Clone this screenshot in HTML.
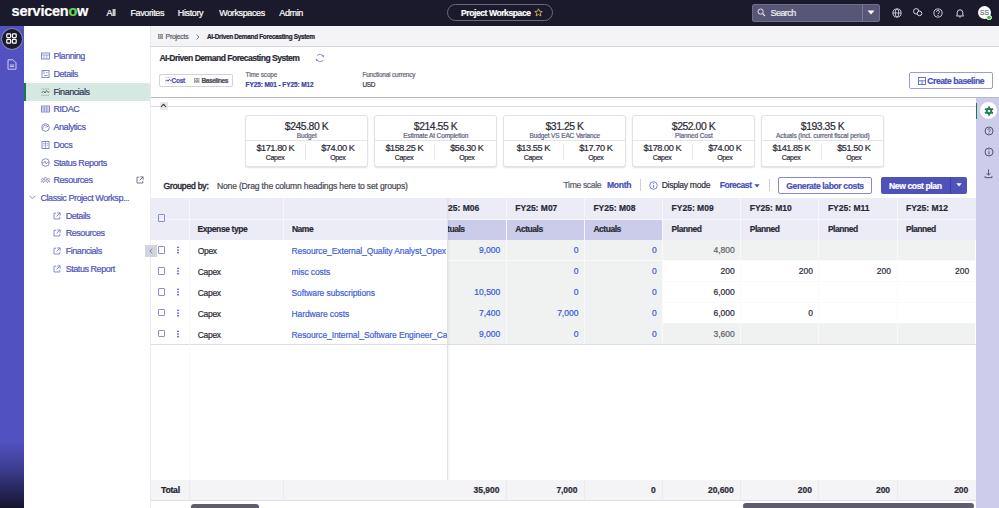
<!DOCTYPE html>
<html><head><meta charset="utf-8"><style>
html,body{margin:0;padding:0;}
body{width:999px;height:508px;overflow:hidden;position:relative;font-family:"Liberation Sans", sans-serif;background:#fff;}
div{-webkit-text-stroke:0.2px currentColor;}
</style></head><body>
<div style="position:absolute;left:0px;top:0px;width:999px;height:26px;background:#1b1a2c;"></div>
<div style="position:absolute;left:11.6px;top:1.8499999999999996px;height:18px;line-height:18px;font-size:14.5px;font-weight:700;color:#fff;letter-spacing:-0.25px;white-space:nowrap;">servicen<span style="color:#62d84e">o</span>w</div>
<div style="position:absolute;left:106.6px;top:6.5px;height:12px;line-height:12px;font-size:9px;font-weight:400;color:#fff;letter-spacing:-0.38px;white-space:nowrap;">All</div>
<div style="position:absolute;left:130.5px;top:6.5px;height:12px;line-height:12px;font-size:9px;font-weight:400;color:#fff;letter-spacing:-0.38px;white-space:nowrap;">Favorites</div>
<div style="position:absolute;left:177.8px;top:6.5px;height:12px;line-height:12px;font-size:9px;font-weight:400;color:#fff;letter-spacing:-0.38px;white-space:nowrap;">History</div>
<div style="position:absolute;left:219.3px;top:6.5px;height:12px;line-height:12px;font-size:9px;font-weight:400;color:#fff;letter-spacing:-0.38px;white-space:nowrap;">Workspaces</div>
<div style="position:absolute;left:279.3px;top:6.5px;height:12px;line-height:12px;font-size:9px;font-weight:400;color:#fff;letter-spacing:-0.38px;white-space:nowrap;">Admin</div>
<div style="position:absolute;left:447px;top:4px;width:106px;height:17px;border:1px solid #6b6a7c;border-radius:9px;box-sizing:border-box;"></div>
<div style="position:absolute;left:461px;top:6.6px;height:12px;line-height:12px;font-size:8.6px;font-weight:700;color:#fff;letter-spacing:-0.45px;white-space:nowrap;">Project Workspace</div>
<svg style="position:absolute;left:534px;top:7.5px" width="9" height="9" viewBox="0 0 9 9"><path d="M4.5 0.8 L5.6 3.3 L8.2 3.5 L6.2 5.2 L6.9 7.9 L4.5 6.5 L2.1 7.9 L2.8 5.2 L0.8 3.5 L3.4 3.3 Z" fill="none" stroke="#d9b25c" stroke-width="0.9" stroke-linejoin="round"/></svg>
<div style="position:absolute;left:752px;top:3.5px;width:128px;height:18px;background:#575677;border:1px solid #6e6d8a;border-radius:2px;box-sizing:border-box;"></div>
<div style="position:absolute;left:862px;top:4.5px;width:1px;height:16px;background:#7b7a94;"></div>
<svg style="position:absolute;left:757px;top:8px" width="9" height="9" viewBox="0 0 9 9"><circle cx="3.6" cy="3.6" r="2.6" fill="none" stroke="#e6e6ee" stroke-width="1"/><path d="M5.5 5.5 L8 8" stroke="#e6e6ee" stroke-width="1.1"/></svg>
<div style="position:absolute;left:770.5px;top:6.6px;height:12px;line-height:12px;font-size:9px;font-weight:400;color:#f0f0f5;letter-spacing:-0.55px;white-space:nowrap;">Search</div>
<svg style="position:absolute;left:867px;top:10px" width="8" height="5" viewBox="0 0 8 5"><path d="M0.5 0.5 L7.5 0.5 L4 4.5 Z" fill="#fff"/></svg>
<svg style="position:absolute;left:891.7px;top:7.5px" width="10" height="10" viewBox="0 0 10 10"><circle cx="5" cy="5" r="4.1" fill="none" stroke="#e8e8ee" stroke-width="0.85"/><ellipse cx="5" cy="5" rx="1.7" ry="4.1" fill="none" stroke="#e8e8ee" stroke-width="0.75"/><path d="M0.9 5 H9.1" stroke="#e8e8ee" stroke-width="0.75"/></svg>
<svg style="position:absolute;left:910px;top:5px" width="14" height="14" viewBox="0 0 14 14"><circle cx="6.2" cy="6.3" r="2.7" fill="none" stroke="#e8e8ee" stroke-width="0.9"/><circle cx="9.5" cy="8.4" r="2.3" fill="#1b1a2c" stroke="#e8e8ee" stroke-width="0.9"/></svg>
<svg style="position:absolute;left:933px;top:7.6px" width="10" height="10" viewBox="0 0 10 10"><circle cx="5" cy="5" r="4.1" fill="none" stroke="#e8e8ee" stroke-width="0.85"/><path d="M3.6 3.8 a1.4 1.4 0 1 1 1.9 1.3 L5 6" fill="none" stroke="#e8e8ee" stroke-width="0.9"/><circle cx="5" cy="7.4" r="0.55" fill="#e8e8ee"/></svg>
<svg style="position:absolute;left:955px;top:7.5px" width="10" height="10" viewBox="0 0 10 10"><path d="M2.2 7.2 V4.6 a2.8 2.8 0 0 1 5.6 0 V7.2 L8.6 8 H1.4 Z" fill="none" stroke="#e8e8ee" stroke-width="0.9" stroke-linejoin="round"/><path d="M4.2 9 H5.8" stroke="#e8e8ee" stroke-width="0.9"/></svg>
<div style="position:absolute;left:978px;top:6px;width:13px;height:13px;background:#fff;border-radius:50%;"></div>
<div style="position:absolute;left:684.4px;width:600px;text-align:center;top:6.5px;height:12px;line-height:12px;font-size:6.6px;font-weight:400;color:#6a6a78;letter-spacing:-0.1px;white-space:nowrap;">SS</div>
<div style="position:absolute;left:986.2px;top:14.6px;width:3.8px;height:3.8px;background:#4cc23a;border-radius:50%;border:0.5px solid #fff;"></div>
<div style="position:absolute;left:0px;top:26px;width:24px;height:482px;background:linear-gradient(to bottom,#5151c1 0px,#5151c1 416px,#3a3a8a 446px,#22204e 470px,#15142a 482px);"></div>
<div style="position:absolute;left:1.5px;top:28.5px;width:20.5px;height:20.5px;background:#1b1a2c;border-radius:50%;box-shadow:0 0 0 0.8px #8a8ab0;"></div>
<svg style="position:absolute;left:6px;top:33px" width="11" height="11" viewBox="0 0 11 11"><rect x="0.8" y="0.8" width="3.8" height="3.8" rx="0.8" fill="none" stroke="#fff" stroke-width="1.2"/><rect x="6.4" y="0.8" width="3.8" height="3.8" rx="0.8" fill="none" stroke="#fff" stroke-width="1.2"/><rect x="0.8" y="6.4" width="3.8" height="3.8" rx="0.8" fill="none" stroke="#fff" stroke-width="1.2"/><rect x="6.4" y="6.4" width="3.8" height="3.8" rx="0.8" fill="none" stroke="#fff" stroke-width="1.2"/></svg>
<svg style="position:absolute;left:6.5px;top:58.5px" width="10" height="11" viewBox="0 0 10 11"><path d="M1 0.8 H6 L9 3.8 V10.2 H1 Z" fill="none" stroke="#dcdcf0" stroke-width="0.9" stroke-linejoin="round"/><path d="M2.8 6 H7.2 M2.8 7.6 H7.2" stroke="#dcdcf0" stroke-width="0.9"/></svg>
<div style="position:absolute;left:24px;top:26px;width:127px;height:482px;background:#fff;"></div>
<div style="position:absolute;left:150px;top:26px;width:2px;height:482px;background:#e9e9ee;"></div>
<div style="position:absolute;left:24px;top:83px;width:126px;height:17.5px;background:#d5e8e2;"></div>
<div style="position:absolute;left:24px;top:83px;width:2px;height:17.5px;background:#1b7a4c;"></div>
<div style="position:absolute;left:53.5px;top:50.0px;height:12px;line-height:12px;font-size:9px;font-weight:400;color:#4e52b8;letter-spacing:-0.45px;white-space:nowrap;">Planning</div>
<div style="position:absolute;left:53.5px;top:67.8px;height:12px;line-height:12px;font-size:9px;font-weight:400;color:#4e52b8;letter-spacing:-0.45px;white-space:nowrap;">Details</div>
<div style="position:absolute;left:53.5px;top:85.6px;height:12px;line-height:12px;font-size:9px;font-weight:400;color:#30325a;letter-spacing:-0.45px;white-space:nowrap;">Financials</div>
<div style="position:absolute;left:53.5px;top:103.2px;height:12px;line-height:12px;font-size:9px;font-weight:400;color:#4e52b8;letter-spacing:-0.45px;white-space:nowrap;">RIDAC</div>
<div style="position:absolute;left:53.5px;top:121.0px;height:12px;line-height:12px;font-size:9px;font-weight:400;color:#4e52b8;letter-spacing:-0.45px;white-space:nowrap;">Analytics</div>
<div style="position:absolute;left:53.5px;top:138.8px;height:12px;line-height:12px;font-size:9px;font-weight:400;color:#4e52b8;letter-spacing:-0.45px;white-space:nowrap;">Docs</div>
<div style="position:absolute;left:53.5px;top:156.5px;height:12px;line-height:12px;font-size:9px;font-weight:400;color:#4e52b8;letter-spacing:-0.45px;white-space:nowrap;">Status Reports</div>
<div style="position:absolute;left:53.5px;top:174.2px;height:12px;line-height:12px;font-size:9px;font-weight:400;color:#4e52b8;letter-spacing:-0.45px;white-space:nowrap;">Resources</div>
<svg style="position:absolute;left:40.5px;top:52px" width="9" height="8" viewBox="0 0 9 8"><rect x="0.5" y="1" width="8" height="6" fill="none" stroke="#7a7ecc" stroke-width="0.9"/><path d="M0.5 3 H8.5 M3 3 V7 M5.8 3 V7" stroke="#7a7ecc" stroke-width="0.7"/></svg>
<svg style="position:absolute;left:40.5px;top:69.8px" width="9" height="8" viewBox="0 0 9 8"><rect x="1" y="0.5" width="7" height="7" fill="none" stroke="#7a7ecc" stroke-width="0.9"/><path d="M3 0.5 V4 M3 5.5 H6.5 M5 2.5 H6.5" stroke="#7a7ecc" stroke-width="0.8"/></svg>
<svg style="position:absolute;left:40.5px;top:87.6px" width="9" height="8" viewBox="0 0 9 8"><path d="M0.5 1 H8.5 M0.5 7.3 H8.5" stroke="#5b5b6a" stroke-width="0.5" stroke-dasharray="1 0.6"/><path d="M0.5 5 L2.5 3 L4 5 L5.5 2.5 L7 4.5 L8.5 3.5" fill="none" stroke="#5b5b6a" stroke-width="0.9"/></svg>
<svg style="position:absolute;left:40.5px;top:105.2px" width="9" height="8" viewBox="0 0 9 8"><rect x="0.5" y="1" width="8" height="6" fill="none" stroke="#7a7ecc" stroke-width="0.9"/><path d="M0.5 3 H8.5 M0.5 5 H8.5 M3.2 1 V7 M5.8 1 V7" stroke="#7a7ecc" stroke-width="0.7"/></svg>
<svg style="position:absolute;left:40.5px;top:122.5px" width="9" height="9" viewBox="0 0 9 9"><circle cx="4.5" cy="4.5" r="3.8" fill="none" stroke="#7a7ecc" stroke-width="0.9"/><path d="M2 6 a2.6 2.6 0 0 1 5 -2 M4.5 5 L6.5 3" fill="none" stroke="#7a7ecc" stroke-width="0.8"/></svg>
<svg style="position:absolute;left:40.5px;top:140.8px" width="9" height="8" viewBox="0 0 9 8"><rect x="1" y="0.5" width="7" height="7" fill="none" stroke="#7a7ecc" stroke-width="0.9"/><path d="M4.5 0.5 V7.5 M2.2 2.5 H3.6 M5.4 2.5 H6.8 M2.2 4.2 H3.6 M5.4 4.2 H6.8" stroke="#7a7ecc" stroke-width="0.7"/></svg>
<svg style="position:absolute;left:40.5px;top:158.0px" width="9" height="9" viewBox="0 0 9 9"><circle cx="4.5" cy="4.5" r="3.8" fill="none" stroke="#7a7ecc" stroke-width="0.9"/><path d="M1 4.8 L3 4.8 L4 3 L5.2 6 L6.2 4.5 L8 4.5" fill="none" stroke="#7a7ecc" stroke-width="0.8"/></svg>
<svg style="position:absolute;left:40.5px;top:176.2px" width="9" height="8" viewBox="0 0 9 8"><circle cx="4.5" cy="2.8" r="1.4" fill="none" stroke="#7a7ecc" stroke-width="0.8"/><circle cx="1.6" cy="3.4" r="1" fill="none" stroke="#7a7ecc" stroke-width="0.7"/><circle cx="7.4" cy="3.4" r="1" fill="none" stroke="#7a7ecc" stroke-width="0.7"/><path d="M2.4 7 a2.1 2 0 0 1 4.2 0 M0 6.6 a1.5 1.5 0 0 1 2 -1.4 M9 6.6 a1.5 1.5 0 0 0 -2 -1.4" fill="none" stroke="#7a7ecc" stroke-width="0.8"/></svg>
<svg style="position:absolute;left:136px;top:176.0px" width="8" height="8" viewBox="0 0 8 8"><path d="M3.2 1.2 H1 V7 H6.8 V4.8" fill="none" stroke="#6a6a7a" stroke-width="0.9"/><path d="M4.2 0.9 H7.1 V3.8 M7.1 0.9 L3.6 4.4" fill="none" stroke="#6a6a7a" stroke-width="0.9"/></svg>
<svg style="position:absolute;left:28.5px;top:195px" width="7" height="5" viewBox="0 0 7 5"><path d="M0.6 0.8 L3.5 3.8 L6.4 0.8" fill="none" stroke="#8a8aa0" stroke-width="0.9"/></svg>
<div style="position:absolute;left:40.5px;top:192.0px;height:12px;line-height:12px;font-size:9px;font-weight:400;color:#4e52b8;letter-spacing:-0.45px;white-space:nowrap;">Classic Project Worksp...</div>
<svg style="position:absolute;left:52.5px;top:211.6px" width="8" height="8" viewBox="0 0 8 8"><path d="M3.2 1.2 H1 V7 H6.8 V4.8" fill="none" stroke="#7a7ecc" stroke-width="0.9"/><path d="M4.2 0.9 H7.1 V3.8 M7.1 0.9 L3.6 4.4" fill="none" stroke="#7a7ecc" stroke-width="0.9"/></svg>
<div style="position:absolute;left:65.7px;top:209.6px;height:12px;line-height:12px;font-size:9px;font-weight:400;color:#4e52b8;letter-spacing:-0.45px;white-space:nowrap;">Details</div>
<svg style="position:absolute;left:52.5px;top:229.3px" width="8" height="8" viewBox="0 0 8 8"><path d="M3.2 1.2 H1 V7 H6.8 V4.8" fill="none" stroke="#7a7ecc" stroke-width="0.9"/><path d="M4.2 0.9 H7.1 V3.8 M7.1 0.9 L3.6 4.4" fill="none" stroke="#7a7ecc" stroke-width="0.9"/></svg>
<div style="position:absolute;left:65.7px;top:227.3px;height:12px;line-height:12px;font-size:9px;font-weight:400;color:#4e52b8;letter-spacing:-0.45px;white-space:nowrap;">Resources</div>
<svg style="position:absolute;left:52.5px;top:247.0px" width="8" height="8" viewBox="0 0 8 8"><path d="M3.2 1.2 H1 V7 H6.8 V4.8" fill="none" stroke="#7a7ecc" stroke-width="0.9"/><path d="M4.2 0.9 H7.1 V3.8 M7.1 0.9 L3.6 4.4" fill="none" stroke="#7a7ecc" stroke-width="0.9"/></svg>
<div style="position:absolute;left:65.7px;top:245.0px;height:12px;line-height:12px;font-size:9px;font-weight:400;color:#4e52b8;letter-spacing:-0.45px;white-space:nowrap;">Financials</div>
<svg style="position:absolute;left:52.5px;top:264.7px" width="8" height="8" viewBox="0 0 8 8"><path d="M3.2 1.2 H1 V7 H6.8 V4.8" fill="none" stroke="#7a7ecc" stroke-width="0.9"/><path d="M4.2 0.9 H7.1 V3.8 M7.1 0.9 L3.6 4.4" fill="none" stroke="#7a7ecc" stroke-width="0.9"/></svg>
<div style="position:absolute;left:65.7px;top:262.7px;height:12px;line-height:12px;font-size:9px;font-weight:400;color:#4e52b8;letter-spacing:-0.45px;white-space:nowrap;">Status Report</div>
<div style="position:absolute;left:151px;top:26px;width:848px;height:482px;background:#fff;"></div>
<div style="position:absolute;left:151px;top:26px;width:848px;height:20px;background:#f4f4f6;"></div>
<div style="position:absolute;left:151px;top:46px;width:848px;height:1.4px;background:#d4d5dc;"></div>
<svg style="position:absolute;left:157.8px;top:34px" width="5.2" height="5.2" viewBox="0 0 5.2 5.2"><rect x="0.4" y="0.4" width="1.8" height="1.8" fill="none" stroke="#777" stroke-width="0.7"/><rect x="3" y="0.4" width="1.8" height="1.8" fill="none" stroke="#777" stroke-width="0.7"/><rect x="0.4" y="3" width="1.8" height="1.8" fill="none" stroke="#777" stroke-width="0.7"/><rect x="3" y="3" width="1.8" height="1.8" fill="none" stroke="#777" stroke-width="0.7"/></svg>
<div style="position:absolute;left:165.6px;top:31.1px;height:12px;line-height:12px;font-size:6.8px;font-weight:400;color:#555566;letter-spacing:-0.22px;white-space:nowrap;">Projects</div>
<svg style="position:absolute;left:196.3px;top:33.6px" width="4" height="6" viewBox="0 0 4 6"><path d="M0.6 0.6 L3 3 L0.6 5.4" fill="none" stroke="#555" stroke-width="0.8"/></svg>
<div style="position:absolute;left:207px;top:31.1px;height:12px;line-height:12px;font-size:6.4px;font-weight:700;color:#222230;letter-spacing:-0.29px;white-space:nowrap;">AI-Driven Demand Forecasting System</div>
<div style="position:absolute;left:159.4px;top:50.7px;height:14px;line-height:14px;font-size:8.6px;font-weight:700;color:#2a2a36;letter-spacing:-0.53px;white-space:nowrap;">AI-Driven Demand Forecasting System</div>
<svg style="position:absolute;left:315px;top:52.5px" width="10" height="10" viewBox="0 0 10 10"><path d="M8.6 4.2 A3.9 3.9 0 0 0 2 2.6 M1.4 5.8 A3.9 3.9 0 0 0 8 7.4" fill="none" stroke="#6a70d4" stroke-width="0.8"/><path d="M7 2.6 L8.8 2.2 L8.8 4.3 Z M3 7.4 L1.2 7.8 L1.2 5.7 Z" fill="#4e52c8"/></svg>
<div style="position:absolute;left:159.4px;top:73.6px;width:73.2px;height:13.8px;border:1px solid #d2d2da;border-radius:2px;box-sizing:border-box;background:#fff;"></div>
<svg style="position:absolute;left:164.6px;top:76.5px" width="7" height="7.4" viewBox="0 0 7 7.4"><path d="M0.3 0.6 H6.7 M0.3 6.8 H6.7" stroke="#7a7ed0" stroke-width="0.5" stroke-dasharray="0.9 0.5"/><path d="M0.3 4.4 L1.8 2.8 L3 4.3 L4.4 2.2 L5.6 3.8 L6.7 3" fill="none" stroke="#4e52b8" stroke-width="1"/></svg>
<div style="position:absolute;left:171.6px;top:75.1px;height:12px;line-height:12px;font-size:6.6px;font-weight:700;color:#4e52b8;letter-spacing:-0.35px;white-space:nowrap;">Cost</div>
<svg style="position:absolute;left:194.3px;top:77.6px" width="5.4" height="5.6" viewBox="0 0 5.4 5.6"><g fill="none" stroke="#8a8a96" stroke-width="0.75"><rect x="0.4" y="0.4" width="1.9" height="1.9"/><rect x="3.1" y="0.4" width="1.9" height="1.9"/><rect x="0.4" y="3.3" width="1.9" height="1.9"/><rect x="3.1" y="3.3" width="1.9" height="1.9"/></g></svg>
<div style="position:absolute;left:201.6px;top:75.1px;height:12px;line-height:12px;font-size:6.6px;font-weight:700;color:#4a4a58;letter-spacing:-0.5px;white-space:nowrap;">Baselines</div>
<div style="position:absolute;left:245.6px;top:69.1px;height:12px;line-height:12px;font-size:6.4px;font-weight:400;color:#666676;letter-spacing:-0.12px;white-space:nowrap;">Time scope</div>
<div style="position:absolute;left:245.6px;top:79.1px;height:12px;line-height:12px;font-size:6.5px;font-weight:700;color:#3c42a8;letter-spacing:-0.1px;white-space:nowrap;">FY25: M01 - FY25: M12</div>
<div style="position:absolute;left:362.4px;top:69.3px;height:12px;line-height:12px;font-size:6.4px;font-weight:400;color:#666676;letter-spacing:-0.15px;white-space:nowrap;">Functional currency</div>
<div style="position:absolute;left:362.4px;top:78.7px;height:12px;line-height:12px;font-size:6.4px;font-weight:400;color:#333340;letter-spacing:-0.2px;white-space:nowrap;">USD</div>
<div style="position:absolute;left:909px;top:72.3px;width:84px;height:16.7px;border:1px solid #9a9ddc;border-radius:2px;box-sizing:border-box;"></div>
<svg style="position:absolute;left:917.5px;top:76.8px" width="8" height="8" viewBox="0 0 8 8"><rect x="0.5" y="0.5" width="7" height="7" fill="none" stroke="#5b62d0" stroke-width="0.9"/><path d="M0.5 3.8 H7.5 M4 3.8 V7.5" stroke="#5b62d0" stroke-width="0.9"/></svg>
<div style="position:absolute;left:927.3px;top:74.6px;height:12px;line-height:12px;font-size:8.6px;font-weight:700;color:#4a4fb8;letter-spacing:-0.45px;white-space:nowrap;">Create baseline</div>
<div style="position:absolute;left:151px;top:97px;width:848px;height:1px;background:#b6b8cc;"></div>
<div style="position:absolute;left:151px;top:106px;width:825px;height:1px;background:#dcdde4;"></div>
<div style="position:absolute;left:159.5px;top:101.8px;width:8.5px;height:8.5px;background:#e8e8ec;"></div>
<svg style="position:absolute;left:160.3px;top:103.2px" width="7" height="5" viewBox="0 0 7 5"><path d="M0.9 4 L3.5 1.3 L6.1 4" fill="none" stroke="#333" stroke-width="1.05"/></svg>
<div style="position:absolute;left:976px;top:98px;width:23px;height:410px;background:#cdcdeb;"></div>
<div style="position:absolute;left:976px;top:102.8px;width:1.4px;height:16.2px;background:#1b7a4c;"></div>
<div style="position:absolute;left:980px;top:102.3px;width:16.6px;height:16.6px;background:#fff;border-radius:50%;"></div>
<svg style="position:absolute;left:983.5px;top:106px" width="10" height="10" viewBox="0 0 10 10"><g fill="#1f7a4e"><circle cx="5" cy="5" r="3.2"/><rect x="4.1" y="0.4" width="1.8" height="2.2" transform="rotate(0 5 5)"/><rect x="4.1" y="0.4" width="1.8" height="2.2" transform="rotate(60 5 5)"/><rect x="4.1" y="0.4" width="1.8" height="2.2" transform="rotate(120 5 5)"/><rect x="4.1" y="0.4" width="1.8" height="2.2" transform="rotate(180 5 5)"/><rect x="4.1" y="0.4" width="1.8" height="2.2" transform="rotate(240 5 5)"/><rect x="4.1" y="0.4" width="1.8" height="2.2" transform="rotate(300 5 5)"/></g><circle cx="5" cy="5" r="1.3" fill="#fff"/></svg>
<svg style="position:absolute;left:983.5px;top:126.4px" width="10" height="10" viewBox="0 0 10 10"><circle cx="5" cy="5" r="4" fill="none" stroke="#4a4a5a" stroke-width="0.9"/><path d="M3.7 4 a1.3 1.3 0 1 1 1.8 1.2 L5 6" fill="none" stroke="#4a4a5a" stroke-width="0.8"/><circle cx="5" cy="7.3" r="0.5" fill="#4a4a5a"/></svg>
<svg style="position:absolute;left:983.5px;top:147.3px" width="10" height="10" viewBox="0 0 10 10"><circle cx="5" cy="5" r="4" fill="none" stroke="#4a4a5a" stroke-width="0.9"/><path d="M5 4.3 V7.5" stroke="#4a4a5a" stroke-width="0.9"/><circle cx="5" cy="2.8" r="0.55" fill="#4a4a5a"/></svg>
<svg style="position:absolute;left:984px;top:168.5px" width="9" height="10" viewBox="0 0 9 10"><path d="M4.5 0.5 V6 M2.6 4.2 L4.5 6.2 L6.4 4.2" fill="none" stroke="#4a4a5a" stroke-width="0.9"/><path d="M1 7.2 V8.6 H8 V7.2" fill="none" stroke="#4a4a5a" stroke-width="0.9"/></svg>
<div style="position:absolute;left:244.8px;top:115.1px;width:123px;height:51.5px;border:1px solid #e2e2e8;border-radius:3px;box-sizing:border-box;background:#fff;box-shadow:0 1px 1.5px rgba(0,0,0,0.12);"></div>
<div style="position:absolute;left:245.8px;top:140px;width:121px;height:1px;background:#e4e4ea;"></div>
<div style="position:absolute;left:304.8px;top:144px;width:1px;height:16px;background:#e6e6ec;"></div>
<div style="position:absolute;left:6.5px;width:600px;text-align:center;top:119.8px;height:14px;line-height:14px;font-size:10.4px;font-weight:400;color:#2a2a36;letter-spacing:-0.45px;white-space:nowrap;">$245.80 K</div>
<div style="position:absolute;left:6.800000000000011px;width:600px;text-align:center;top:132.2px;height:8px;line-height:8px;font-size:6.5px;font-weight:400;color:#5c6080;letter-spacing:-0.12px;white-space:nowrap;">Budget</div>
<div style="position:absolute;left:-24.69999999999999px;width:600px;text-align:center;top:142.1px;height:12px;line-height:12px;font-size:9.2px;font-weight:400;color:#2a2a36;letter-spacing:-0.45px;white-space:nowrap;">$171.80 K</div>
<div style="position:absolute;left:-24.899999999999977px;width:600px;text-align:center;top:153.1px;height:9px;line-height:9px;font-size:7px;font-weight:400;color:#2a2a36;letter-spacing:-0.35px;white-space:nowrap;">Capex</div>
<div style="position:absolute;left:37.80000000000001px;width:600px;text-align:center;top:142.1px;height:12px;line-height:12px;font-size:9.2px;font-weight:400;color:#2a2a36;letter-spacing:-0.45px;white-space:nowrap;">$74.00 K</div>
<div style="position:absolute;left:37.80000000000001px;width:600px;text-align:center;top:153.1px;height:9px;line-height:9px;font-size:7px;font-weight:400;color:#2a2a36;letter-spacing:-0.35px;white-space:nowrap;">Opex</div>
<div style="position:absolute;left:373.8px;top:115.1px;width:123px;height:51.5px;border:1px solid #e2e2e8;border-radius:3px;box-sizing:border-box;background:#fff;box-shadow:0 1px 1.5px rgba(0,0,0,0.12);"></div>
<div style="position:absolute;left:374.8px;top:140px;width:121px;height:1px;background:#e4e4ea;"></div>
<div style="position:absolute;left:433.8px;top:144px;width:1px;height:16px;background:#e6e6ec;"></div>
<div style="position:absolute;left:135.5px;width:600px;text-align:center;top:119.8px;height:14px;line-height:14px;font-size:10.4px;font-weight:400;color:#2a2a36;letter-spacing:-0.45px;white-space:nowrap;">$214.55 K</div>
<div style="position:absolute;left:135.8px;width:600px;text-align:center;top:132.2px;height:8px;line-height:8px;font-size:6.5px;font-weight:400;color:#5c6080;letter-spacing:-0.12px;white-space:nowrap;">Estimate At Completion</div>
<div style="position:absolute;left:104.30000000000001px;width:600px;text-align:center;top:142.1px;height:12px;line-height:12px;font-size:9.2px;font-weight:400;color:#2a2a36;letter-spacing:-0.45px;white-space:nowrap;">$158.25 K</div>
<div style="position:absolute;left:104.10000000000002px;width:600px;text-align:center;top:153.1px;height:9px;line-height:9px;font-size:7px;font-weight:400;color:#2a2a36;letter-spacing:-0.35px;white-space:nowrap;">Capex</div>
<div style="position:absolute;left:166.8px;width:600px;text-align:center;top:142.1px;height:12px;line-height:12px;font-size:9.2px;font-weight:400;color:#2a2a36;letter-spacing:-0.45px;white-space:nowrap;">$56.30 K</div>
<div style="position:absolute;left:166.8px;width:600px;text-align:center;top:153.1px;height:9px;line-height:9px;font-size:7px;font-weight:400;color:#2a2a36;letter-spacing:-0.35px;white-space:nowrap;">Opex</div>
<div style="position:absolute;left:502.8px;top:115.1px;width:123px;height:51.5px;border:1px solid #e2e2e8;border-radius:3px;box-sizing:border-box;background:#fff;box-shadow:0 1px 1.5px rgba(0,0,0,0.12);"></div>
<div style="position:absolute;left:503.8px;top:140px;width:121px;height:1px;background:#e4e4ea;"></div>
<div style="position:absolute;left:562.8px;top:144px;width:1px;height:16px;background:#e6e6ec;"></div>
<div style="position:absolute;left:264.5px;width:600px;text-align:center;top:119.8px;height:14px;line-height:14px;font-size:10.4px;font-weight:400;color:#2a2a36;letter-spacing:-0.45px;white-space:nowrap;">$31.25 K</div>
<div style="position:absolute;left:264.79999999999995px;width:600px;text-align:center;top:132.2px;height:8px;line-height:8px;font-size:6.5px;font-weight:400;color:#5c6080;letter-spacing:-0.12px;white-space:nowrap;">Budget VS EAC Variance</div>
<div style="position:absolute;left:233.29999999999995px;width:600px;text-align:center;top:142.1px;height:12px;line-height:12px;font-size:9.2px;font-weight:400;color:#2a2a36;letter-spacing:-0.45px;white-space:nowrap;">$13.55 K</div>
<div style="position:absolute;left:233.10000000000002px;width:600px;text-align:center;top:153.1px;height:9px;line-height:9px;font-size:7px;font-weight:400;color:#2a2a36;letter-spacing:-0.35px;white-space:nowrap;">Capex</div>
<div style="position:absolute;left:295.79999999999995px;width:600px;text-align:center;top:142.1px;height:12px;line-height:12px;font-size:9.2px;font-weight:400;color:#2a2a36;letter-spacing:-0.45px;white-space:nowrap;">$17.70 K</div>
<div style="position:absolute;left:295.79999999999995px;width:600px;text-align:center;top:153.1px;height:9px;line-height:9px;font-size:7px;font-weight:400;color:#2a2a36;letter-spacing:-0.35px;white-space:nowrap;">Opex</div>
<div style="position:absolute;left:631.8px;top:115.1px;width:123px;height:51.5px;border:1px solid #e2e2e8;border-radius:3px;box-sizing:border-box;background:#fff;box-shadow:0 1px 1.5px rgba(0,0,0,0.12);"></div>
<div style="position:absolute;left:632.8px;top:140px;width:121px;height:1px;background:#e4e4ea;"></div>
<div style="position:absolute;left:691.8px;top:144px;width:1px;height:16px;background:#e6e6ec;"></div>
<div style="position:absolute;left:393.5px;width:600px;text-align:center;top:119.8px;height:14px;line-height:14px;font-size:10.4px;font-weight:400;color:#2a2a36;letter-spacing:-0.45px;white-space:nowrap;">$252.00 K</div>
<div style="position:absolute;left:393.79999999999995px;width:600px;text-align:center;top:132.2px;height:8px;line-height:8px;font-size:6.5px;font-weight:400;color:#5c6080;letter-spacing:-0.12px;white-space:nowrap;">Planned Cost</div>
<div style="position:absolute;left:362.29999999999995px;width:600px;text-align:center;top:142.1px;height:12px;line-height:12px;font-size:9.2px;font-weight:400;color:#2a2a36;letter-spacing:-0.45px;white-space:nowrap;">$178.00 K</div>
<div style="position:absolute;left:362.0999999999999px;width:600px;text-align:center;top:153.1px;height:9px;line-height:9px;font-size:7px;font-weight:400;color:#2a2a36;letter-spacing:-0.35px;white-space:nowrap;">Capex</div>
<div style="position:absolute;left:424.79999999999995px;width:600px;text-align:center;top:142.1px;height:12px;line-height:12px;font-size:9.2px;font-weight:400;color:#2a2a36;letter-spacing:-0.45px;white-space:nowrap;">$74.00 K</div>
<div style="position:absolute;left:424.79999999999995px;width:600px;text-align:center;top:153.1px;height:9px;line-height:9px;font-size:7px;font-weight:400;color:#2a2a36;letter-spacing:-0.35px;white-space:nowrap;">Opex</div>
<div style="position:absolute;left:760.8px;top:115.1px;width:123px;height:51.5px;border:1px solid #e2e2e8;border-radius:3px;box-sizing:border-box;background:#fff;box-shadow:0 1px 1.5px rgba(0,0,0,0.12);"></div>
<div style="position:absolute;left:761.8px;top:140px;width:121px;height:1px;background:#e4e4ea;"></div>
<div style="position:absolute;left:820.8px;top:144px;width:1px;height:16px;background:#e6e6ec;"></div>
<div style="position:absolute;left:522.5px;width:600px;text-align:center;top:119.8px;height:14px;line-height:14px;font-size:10.4px;font-weight:400;color:#2a2a36;letter-spacing:-0.45px;white-space:nowrap;">$193.35 K</div>
<div style="position:absolute;left:522.8px;width:600px;text-align:center;top:132.2px;height:8px;line-height:8px;font-size:6.5px;font-weight:400;color:#5c6080;letter-spacing:-0.12px;white-space:nowrap;">Actuals (Incl. current fiscal period)</div>
<div style="position:absolute;left:491.29999999999995px;width:600px;text-align:center;top:142.1px;height:12px;line-height:12px;font-size:9.2px;font-weight:400;color:#2a2a36;letter-spacing:-0.45px;white-space:nowrap;">$141.85 K</div>
<div style="position:absolute;left:491.0999999999999px;width:600px;text-align:center;top:153.1px;height:9px;line-height:9px;font-size:7px;font-weight:400;color:#2a2a36;letter-spacing:-0.35px;white-space:nowrap;">Capex</div>
<div style="position:absolute;left:553.8px;width:600px;text-align:center;top:142.1px;height:12px;line-height:12px;font-size:9.2px;font-weight:400;color:#2a2a36;letter-spacing:-0.45px;white-space:nowrap;">$51.50 K</div>
<div style="position:absolute;left:553.8px;width:600px;text-align:center;top:153.1px;height:9px;line-height:9px;font-size:7px;font-weight:400;color:#2a2a36;letter-spacing:-0.35px;white-space:nowrap;">Opex</div>
<div style="position:absolute;left:163.5px;top:179.6px;height:12px;line-height:12px;font-size:8.6px;font-weight:400;color:#2e2e3a;letter-spacing:-0.2px;white-space:nowrap;-webkit-text-stroke:0.45px #2e2e3a;">Grouped by:</div>
<div style="position:absolute;left:217px;top:179.6px;height:12px;line-height:12px;font-size:8.6px;font-weight:400;color:#484854;letter-spacing:-0.2px;white-space:nowrap;">None (Drag the column headings here to set groups)</div>
<div style="position:absolute;left:563.5px;top:179.4px;height:12px;line-height:12px;font-size:8.6px;font-weight:400;color:#5a5a66;letter-spacing:-0.35px;white-space:nowrap;">Time scale</div>
<div style="position:absolute;left:607px;top:179.4px;height:12px;line-height:12px;font-size:8.6px;font-weight:700;color:#4a4fb8;letter-spacing:-0.3px;white-space:nowrap;">Month</div>
<div style="position:absolute;left:640px;top:179px;width:1px;height:12px;background:#d0d0d8;"></div>
<svg style="position:absolute;left:648.5px;top:180.5px" width="9" height="9" viewBox="0 0 9 9"><circle cx="4.5" cy="4.5" r="3.8" fill="none" stroke="#5b62d0" stroke-width="0.8"/><path d="M4.5 3.9 V6.8" stroke="#5b62d0" stroke-width="0.8"/><circle cx="4.5" cy="2.6" r="0.5" fill="#5b62d0"/></svg>
<div style="position:absolute;left:661.7px;top:179.4px;height:12px;line-height:12px;font-size:8.6px;font-weight:400;color:#2e2e3a;letter-spacing:-0.3px;white-space:nowrap;">Display mode</div>
<div style="position:absolute;left:719.7px;top:179.4px;height:12px;line-height:12px;font-size:8.6px;font-weight:700;color:#4a4fb8;letter-spacing:-0.5px;white-space:nowrap;">Forecast</div>
<svg style="position:absolute;left:754px;top:183.5px" width="6" height="4" viewBox="0 0 6 4"><path d="M0.3 0.3 H5.7 L3 3.5 Z" fill="#4a4fb8"/></svg>
<div style="position:absolute;left:769px;top:179px;width:1px;height:12px;background:#d0d0d8;"></div>
<div style="position:absolute;left:778px;top:177.3px;width:94px;height:16.3px;border:1px solid #8488d6;border-radius:2px;box-sizing:border-box;"></div>
<div style="position:absolute;left:525px;width:600px;text-align:center;top:179.8px;height:12px;line-height:12px;font-size:8.6px;font-weight:700;color:#4a4fb8;letter-spacing:-0.4px;white-space:nowrap;">Generate labor costs</div>
<div style="position:absolute;left:880.7px;top:177.3px;width:86.3px;height:16.3px;background:#4f52b8;border-radius:2px;"></div>
<div style="position:absolute;left:950px;top:177.3px;width:1px;height:16.3px;background:#3c3f9c;"></div>
<div style="position:absolute;left:615.3px;width:600px;text-align:center;top:179.8px;height:12px;line-height:12px;font-size:8.6px;font-weight:700;color:#fff;letter-spacing:-0.4px;white-space:nowrap;">New cost plan</div>
<svg style="position:absolute;left:956px;top:183px" width="6" height="4" viewBox="0 0 6 4"><path d="M0.3 0.3 H5.7 L3 3.5 Z" fill="#fff"/></svg>
<div style="position:absolute;left:151px;top:198.3px;width:825px;height:41.29999999999998px;background:#ececf7;"></div>
<div style="position:absolute;left:428.2px;top:219.2px;width:78.10000000000002px;height:20.400000000000006px;background:#cbcbea;"></div>
<div style="position:absolute;left:506.3px;top:219.2px;width:78.09999999999997px;height:20.400000000000006px;background:#cbcbea;"></div>
<div style="position:absolute;left:584.4px;top:219.2px;width:78.20000000000005px;height:20.400000000000006px;background:#cbcbea;"></div>
<div style="position:absolute;left:505.8px;top:198.3px;width:1px;height:41.29999999999998px;background:#f6f6fb;"></div>
<div style="position:absolute;left:583.9px;top:198.3px;width:1px;height:41.29999999999998px;background:#f6f6fb;"></div>
<div style="position:absolute;left:662.1px;top:198.3px;width:1px;height:41.29999999999998px;background:#f6f6fb;"></div>
<div style="position:absolute;left:740.2px;top:198.3px;width:1px;height:41.29999999999998px;background:#f6f6fb;"></div>
<div style="position:absolute;left:818.4px;top:198.3px;width:1px;height:41.29999999999998px;background:#f6f6fb;"></div>
<div style="position:absolute;left:896.5px;top:198.3px;width:1px;height:41.29999999999998px;background:#f6f6fb;"></div>
<div style="position:absolute;left:151px;top:218.7px;width:825px;height:1px;background:#f6f6fb;"></div>
<div style="position:absolute;left:437.2px;top:202.3px;height:12px;line-height:12px;font-size:8.5px;font-weight:700;color:#2a2a36;letter-spacing:0px;white-space:nowrap;">FY25: M06</div>
<div style="position:absolute;left:437.2px;top:223.3px;height:12px;line-height:12px;font-size:8.5px;font-weight:700;color:#2a2a36;letter-spacing:-0.47px;white-space:nowrap;">Actuals</div>
<div style="position:absolute;left:515.3px;top:202.3px;height:12px;line-height:12px;font-size:8.5px;font-weight:700;color:#2a2a36;letter-spacing:0px;white-space:nowrap;">FY25: M07</div>
<div style="position:absolute;left:515.3px;top:223.3px;height:12px;line-height:12px;font-size:8.5px;font-weight:700;color:#2a2a36;letter-spacing:-0.47px;white-space:nowrap;">Actuals</div>
<div style="position:absolute;left:593.4px;top:202.3px;height:12px;line-height:12px;font-size:8.5px;font-weight:700;color:#2a2a36;letter-spacing:0px;white-space:nowrap;">FY25: M08</div>
<div style="position:absolute;left:593.4px;top:223.3px;height:12px;line-height:12px;font-size:8.5px;font-weight:700;color:#2a2a36;letter-spacing:-0.47px;white-space:nowrap;">Actuals</div>
<div style="position:absolute;left:671.6px;top:202.3px;height:12px;line-height:12px;font-size:8.5px;font-weight:700;color:#2a2a36;letter-spacing:0px;white-space:nowrap;">FY25: M09</div>
<div style="position:absolute;left:671.6px;top:223.3px;height:12px;line-height:12px;font-size:8.5px;font-weight:700;color:#2a2a36;letter-spacing:-0.47px;white-space:nowrap;">Planned</div>
<div style="position:absolute;left:749.7px;top:202.3px;height:12px;line-height:12px;font-size:8.5px;font-weight:700;color:#2a2a36;letter-spacing:0px;white-space:nowrap;">FY25: M10</div>
<div style="position:absolute;left:749.7px;top:223.3px;height:12px;line-height:12px;font-size:8.5px;font-weight:700;color:#2a2a36;letter-spacing:-0.47px;white-space:nowrap;">Planned</div>
<div style="position:absolute;left:827.9px;top:202.3px;height:12px;line-height:12px;font-size:8.5px;font-weight:700;color:#2a2a36;letter-spacing:0px;white-space:nowrap;">FY25: M11</div>
<div style="position:absolute;left:827.9px;top:223.3px;height:12px;line-height:12px;font-size:8.5px;font-weight:700;color:#2a2a36;letter-spacing:-0.47px;white-space:nowrap;">Planned</div>
<div style="position:absolute;left:906.0px;top:202.3px;height:12px;line-height:12px;font-size:8.5px;font-weight:700;color:#2a2a36;letter-spacing:0px;white-space:nowrap;">FY25: M12</div>
<div style="position:absolute;left:906.0px;top:223.3px;height:12px;line-height:12px;font-size:8.5px;font-weight:700;color:#2a2a36;letter-spacing:-0.47px;white-space:nowrap;">Planned</div>
<div style="position:absolute;left:428.2px;top:239.6px;width:234.40000000000003px;height:20.94px;background:#f0f1f1;"></div>
<div style="position:absolute;left:662.6px;top:239.6px;width:312.6px;height:20.94px;background:#f0f1f1;"></div>
<div style="position:absolute;left:151px;top:260.04px;width:825px;height:0.8px;background:#fafafb;"></div>
<div style="position:absolute;right:498.7px;top:244.26999999999998px;height:12px;line-height:12px;font-size:8.5px;font-weight:400;color:#3558dc;letter-spacing:0.0px;white-space:nowrap;">9,000</div>
<div style="position:absolute;right:420.6px;top:244.26999999999998px;height:12px;line-height:12px;font-size:8.5px;font-weight:400;color:#3558dc;letter-spacing:0.0px;white-space:nowrap;">0</div>
<div style="position:absolute;right:342.4px;top:244.26999999999998px;height:12px;line-height:12px;font-size:8.5px;font-weight:400;color:#3558dc;letter-spacing:0.0px;white-space:nowrap;">0</div>
<div style="position:absolute;right:264.29999999999995px;top:244.26999999999998px;height:12px;line-height:12px;font-size:8.5px;font-weight:400;color:#60606a;letter-spacing:0.0px;white-space:nowrap;">4,800</div>
<div style="position:absolute;left:428.2px;top:260.54px;width:234.40000000000003px;height:20.94px;background:#f0f1f1;"></div>
<div style="position:absolute;left:151px;top:280.98px;width:825px;height:0.8px;background:#fafafb;"></div>
<div style="position:absolute;right:420.6px;top:265.21000000000004px;height:12px;line-height:12px;font-size:8.5px;font-weight:400;color:#3558dc;letter-spacing:0.0px;white-space:nowrap;">0</div>
<div style="position:absolute;right:342.4px;top:265.21000000000004px;height:12px;line-height:12px;font-size:8.5px;font-weight:400;color:#3558dc;letter-spacing:0.0px;white-space:nowrap;">0</div>
<div style="position:absolute;right:264.29999999999995px;top:265.21000000000004px;height:12px;line-height:12px;font-size:8.5px;font-weight:400;color:#2a2a36;letter-spacing:0.0px;white-space:nowrap;">200</div>
<div style="position:absolute;right:186.10000000000002px;top:265.21000000000004px;height:12px;line-height:12px;font-size:8.5px;font-weight:400;color:#2a2a36;letter-spacing:0.0px;white-space:nowrap;">200</div>
<div style="position:absolute;right:108.0px;top:265.21000000000004px;height:12px;line-height:12px;font-size:8.5px;font-weight:400;color:#2a2a36;letter-spacing:0.0px;white-space:nowrap;">200</div>
<div style="position:absolute;right:29.799999999999955px;top:265.21000000000004px;height:12px;line-height:12px;font-size:8.5px;font-weight:400;color:#2a2a36;letter-spacing:0.0px;white-space:nowrap;">200</div>
<div style="position:absolute;left:428.2px;top:281.48px;width:234.40000000000003px;height:20.94px;background:#f0f1f1;"></div>
<div style="position:absolute;left:151px;top:301.92px;width:825px;height:0.8px;background:#fafafb;"></div>
<div style="position:absolute;right:498.7px;top:286.15000000000003px;height:12px;line-height:12px;font-size:8.5px;font-weight:400;color:#3558dc;letter-spacing:0.0px;white-space:nowrap;">10,500</div>
<div style="position:absolute;right:420.6px;top:286.15000000000003px;height:12px;line-height:12px;font-size:8.5px;font-weight:400;color:#3558dc;letter-spacing:0.0px;white-space:nowrap;">0</div>
<div style="position:absolute;right:342.4px;top:286.15000000000003px;height:12px;line-height:12px;font-size:8.5px;font-weight:400;color:#3558dc;letter-spacing:0.0px;white-space:nowrap;">0</div>
<div style="position:absolute;right:264.29999999999995px;top:286.15000000000003px;height:12px;line-height:12px;font-size:8.5px;font-weight:400;color:#2a2a36;letter-spacing:0.0px;white-space:nowrap;">6,000</div>
<div style="position:absolute;left:428.2px;top:302.42px;width:234.40000000000003px;height:20.94px;background:#f0f1f1;"></div>
<div style="position:absolute;left:151px;top:322.86px;width:825px;height:0.8px;background:#fafafb;"></div>
<div style="position:absolute;right:498.7px;top:307.09000000000003px;height:12px;line-height:12px;font-size:8.5px;font-weight:400;color:#3558dc;letter-spacing:0.0px;white-space:nowrap;">7,400</div>
<div style="position:absolute;right:420.6px;top:307.09000000000003px;height:12px;line-height:12px;font-size:8.5px;font-weight:400;color:#3558dc;letter-spacing:0.0px;white-space:nowrap;">7,000</div>
<div style="position:absolute;right:342.4px;top:307.09000000000003px;height:12px;line-height:12px;font-size:8.5px;font-weight:400;color:#3558dc;letter-spacing:0.0px;white-space:nowrap;">0</div>
<div style="position:absolute;right:264.29999999999995px;top:307.09000000000003px;height:12px;line-height:12px;font-size:8.5px;font-weight:400;color:#2a2a36;letter-spacing:0.0px;white-space:nowrap;">6,000</div>
<div style="position:absolute;right:186.10000000000002px;top:307.09000000000003px;height:12px;line-height:12px;font-size:8.5px;font-weight:400;color:#2a2a36;letter-spacing:0.0px;white-space:nowrap;">0</div>
<div style="position:absolute;left:428.2px;top:323.36px;width:234.40000000000003px;height:20.94px;background:#f0f1f1;"></div>
<div style="position:absolute;left:662.6px;top:323.36px;width:312.6px;height:20.94px;background:#f0f1f1;"></div>
<div style="position:absolute;left:151px;top:343.8px;width:825px;height:0.8px;background:#fafafb;"></div>
<div style="position:absolute;right:498.7px;top:328.03000000000003px;height:12px;line-height:12px;font-size:8.5px;font-weight:400;color:#3558dc;letter-spacing:0.0px;white-space:nowrap;">9,000</div>
<div style="position:absolute;right:420.6px;top:328.03000000000003px;height:12px;line-height:12px;font-size:8.5px;font-weight:400;color:#3558dc;letter-spacing:0.0px;white-space:nowrap;">0</div>
<div style="position:absolute;right:342.4px;top:328.03000000000003px;height:12px;line-height:12px;font-size:8.5px;font-weight:400;color:#3558dc;letter-spacing:0.0px;white-space:nowrap;">0</div>
<div style="position:absolute;right:264.29999999999995px;top:328.03000000000003px;height:12px;line-height:12px;font-size:8.5px;font-weight:400;color:#60606a;letter-spacing:0.0px;white-space:nowrap;">3,600</div>
<div style="position:absolute;left:505.8px;top:239.6px;width:1px;height:104.7px;background:#fafafb;"></div>
<div style="position:absolute;left:583.9px;top:239.6px;width:1px;height:104.7px;background:#fafafb;"></div>
<div style="position:absolute;left:662.1px;top:239.6px;width:1px;height:104.7px;background:#fafafb;"></div>
<div style="position:absolute;left:740.2px;top:239.6px;width:1px;height:104.7px;background:#fafafb;"></div>
<div style="position:absolute;left:818.4px;top:239.6px;width:1px;height:104.7px;background:#fafafb;"></div>
<div style="position:absolute;left:896.5px;top:239.6px;width:1px;height:104.7px;background:#fafafb;"></div>
<div style="position:absolute;left:151px;top:343.8px;width:825px;height:1px;background:#dcdce4;"></div>
<div style="position:absolute;left:151px;top:198.3px;width:297px;height:41.29999999999998px;background:#ececf7;"></div>
<div style="position:absolute;left:151px;top:218.7px;width:297px;height:1px;background:#f6f6fb;"></div>
<div style="position:absolute;left:151px;top:239.6px;width:297px;height:104.7px;background:#fff;"></div>
<div style="position:absolute;left:158px;top:246.47px;width:7.2px;height:7.2px;border:0.9px solid #8a8ed8;border-radius:1px;box-sizing:border-box;"></div>
<svg style="position:absolute;left:177.3px;top:246.07px" width="2" height="8" viewBox="0 0 2 8"><circle cx="1" cy="1.3" r="0.85" fill="#3d44cc"/><circle cx="1" cy="4" r="0.85" fill="#3d44cc"/><circle cx="1" cy="6.7" r="0.85" fill="#3d44cc"/></svg>
<div style="position:absolute;left:197.7px;top:244.76999999999998px;height:12px;line-height:12px;font-size:8.5px;font-weight:400;color:#2a2a36;letter-spacing:-0.3px;white-space:nowrap;">Opex</div>
<div style="position:absolute;left:291.5px;top:244.76999999999998px;width:156px;height:12px;overflow:hidden;line-height:12px;font-size:8.5px;color:#3f5fd8;letter-spacing:-0.1px;white-space:nowrap;">Resource_External_Quality Analyst_Opex</div>
<div style="position:absolute;left:158px;top:267.41px;width:7.2px;height:7.2px;border:0.9px solid #8a8ed8;border-radius:1px;box-sizing:border-box;"></div>
<svg style="position:absolute;left:177.3px;top:267.01000000000005px" width="2" height="8" viewBox="0 0 2 8"><circle cx="1" cy="1.3" r="0.85" fill="#3d44cc"/><circle cx="1" cy="4" r="0.85" fill="#3d44cc"/><circle cx="1" cy="6.7" r="0.85" fill="#3d44cc"/></svg>
<div style="position:absolute;left:197.7px;top:265.71000000000004px;height:12px;line-height:12px;font-size:8.5px;font-weight:400;color:#2a2a36;letter-spacing:-0.3px;white-space:nowrap;">Capex</div>
<div style="position:absolute;left:291.5px;top:265.71000000000004px;width:156px;height:12px;overflow:hidden;line-height:12px;font-size:8.5px;color:#3f5fd8;letter-spacing:-0.1px;white-space:nowrap;">misc costs</div>
<div style="position:absolute;left:158px;top:288.35px;width:7.2px;height:7.2px;border:0.9px solid #8a8ed8;border-radius:1px;box-sizing:border-box;"></div>
<svg style="position:absolute;left:177.3px;top:287.95000000000005px" width="2" height="8" viewBox="0 0 2 8"><circle cx="1" cy="1.3" r="0.85" fill="#3d44cc"/><circle cx="1" cy="4" r="0.85" fill="#3d44cc"/><circle cx="1" cy="6.7" r="0.85" fill="#3d44cc"/></svg>
<div style="position:absolute;left:197.7px;top:286.65000000000003px;height:12px;line-height:12px;font-size:8.5px;font-weight:400;color:#2a2a36;letter-spacing:-0.3px;white-space:nowrap;">Capex</div>
<div style="position:absolute;left:291.5px;top:286.65000000000003px;width:156px;height:12px;overflow:hidden;line-height:12px;font-size:8.5px;color:#3f5fd8;letter-spacing:-0.1px;white-space:nowrap;">Software subscriptions</div>
<div style="position:absolute;left:158px;top:309.29px;width:7.2px;height:7.2px;border:0.9px solid #8a8ed8;border-radius:1px;box-sizing:border-box;"></div>
<svg style="position:absolute;left:177.3px;top:308.89000000000004px" width="2" height="8" viewBox="0 0 2 8"><circle cx="1" cy="1.3" r="0.85" fill="#3d44cc"/><circle cx="1" cy="4" r="0.85" fill="#3d44cc"/><circle cx="1" cy="6.7" r="0.85" fill="#3d44cc"/></svg>
<div style="position:absolute;left:197.7px;top:307.59000000000003px;height:12px;line-height:12px;font-size:8.5px;font-weight:400;color:#2a2a36;letter-spacing:-0.3px;white-space:nowrap;">Capex</div>
<div style="position:absolute;left:291.5px;top:307.59000000000003px;width:156px;height:12px;overflow:hidden;line-height:12px;font-size:8.5px;color:#3f5fd8;letter-spacing:-0.1px;white-space:nowrap;">Hardware costs</div>
<div style="position:absolute;left:158px;top:330.23px;width:7.2px;height:7.2px;border:0.9px solid #8a8ed8;border-radius:1px;box-sizing:border-box;"></div>
<svg style="position:absolute;left:177.3px;top:329.83000000000004px" width="2" height="8" viewBox="0 0 2 8"><circle cx="1" cy="1.3" r="0.85" fill="#3d44cc"/><circle cx="1" cy="4" r="0.85" fill="#3d44cc"/><circle cx="1" cy="6.7" r="0.85" fill="#3d44cc"/></svg>
<div style="position:absolute;left:197.7px;top:328.53000000000003px;height:12px;line-height:12px;font-size:8.5px;font-weight:400;color:#2a2a36;letter-spacing:-0.3px;white-space:nowrap;">Capex</div>
<div style="position:absolute;left:291.5px;top:328.53000000000003px;width:156px;height:12px;overflow:hidden;line-height:12px;font-size:8.5px;color:#3f5fd8;letter-spacing:-0.1px;white-space:nowrap;">Resource_Internal_Software Engineer_Capex</div>
<div style="position:absolute;left:151px;top:343.8px;width:297px;height:1px;background:#dcdce4;"></div>
<div style="position:absolute;left:188.6px;top:198.3px;width:1px;height:41.29999999999998px;background:#f6f6fb;"></div>
<div style="position:absolute;left:282.8px;top:198.3px;width:1px;height:41.29999999999998px;background:#f6f6fb;"></div>
<div style="position:absolute;left:188.6px;top:239.6px;width:0.8px;height:240.4px;background:#f9f9fb;"></div>
<div style="position:absolute;left:158px;top:214.4px;width:7.2px;height:7.2px;border:0.9px solid #8a8ed8;border-radius:1px;box-sizing:border-box;"></div>
<div style="position:absolute;left:197.4px;top:223.3px;height:12px;line-height:12px;font-size:8.5px;font-weight:700;color:#2a2a36;letter-spacing:-0.4px;white-space:nowrap;">Expense type</div>
<div style="position:absolute;left:291.9px;top:223.3px;height:12px;line-height:12px;font-size:8.5px;font-weight:700;color:#2a2a36;letter-spacing:-0.45px;white-space:nowrap;">Name</div>
<div style="position:absolute;left:447.3px;top:198.3px;width:1.2px;height:301.7px;background:#e2e2e6;box-shadow:1px 0 2px rgba(0,0,0,0.08);"></div>
<div style="position:absolute;left:145px;top:245.2px;width:12px;height:11.8px;background:#d3d5dc;"></div>
<svg style="position:absolute;left:148.5px;top:248.3px" width="4" height="6" viewBox="0 0 4 6"><path d="M3.2 0.6 L0.9 3 L3.2 5.4" fill="none" stroke="#5b62d0" stroke-width="0.8"/></svg>
<div style="position:absolute;left:151px;top:480px;width:825px;height:20px;background:#f4f4f6;"></div>
<div style="position:absolute;left:151px;top:500px;width:825px;height:1px;background:#dedee6;"></div>
<div style="position:absolute;left:505.8px;top:480px;width:1px;height:20px;background:#ebebef;"></div>
<div style="position:absolute;left:583.9px;top:480px;width:1px;height:20px;background:#ebebef;"></div>
<div style="position:absolute;left:662.1px;top:480px;width:1px;height:20px;background:#ebebef;"></div>
<div style="position:absolute;left:740.2px;top:480px;width:1px;height:20px;background:#ebebef;"></div>
<div style="position:absolute;left:818.4px;top:480px;width:1px;height:20px;background:#ebebef;"></div>
<div style="position:absolute;left:896.5px;top:480px;width:1px;height:20px;background:#ebebef;"></div>
<div style="position:absolute;left:188.6px;top:480px;width:0.8px;height:20px;background:#ebebef;"></div>
<div style="position:absolute;left:282.8px;top:480px;width:0.8px;height:20px;background:#ebebef;"></div>
<div style="position:absolute;left:161px;top:484.4px;height:12px;line-height:12px;font-size:8.7px;font-weight:700;color:#222230;letter-spacing:-0.25px;white-space:nowrap;">Total</div>
<div style="position:absolute;right:499.7px;top:484.4px;height:12px;line-height:12px;font-size:8.5px;font-weight:700;color:#2a2a36;letter-spacing:-0.05px;white-space:nowrap;">35,900</div>
<div style="position:absolute;right:421.6px;top:484.4px;height:12px;line-height:12px;font-size:8.5px;font-weight:700;color:#2a2a36;letter-spacing:-0.05px;white-space:nowrap;">7,000</div>
<div style="position:absolute;right:343.4px;top:484.4px;height:12px;line-height:12px;font-size:8.5px;font-weight:700;color:#2a2a36;letter-spacing:-0.05px;white-space:nowrap;">0</div>
<div style="position:absolute;right:265.29999999999995px;top:484.4px;height:12px;line-height:12px;font-size:8.5px;font-weight:700;color:#2a2a36;letter-spacing:-0.05px;white-space:nowrap;">20,600</div>
<div style="position:absolute;right:187.10000000000002px;top:484.4px;height:12px;line-height:12px;font-size:8.5px;font-weight:700;color:#2a2a36;letter-spacing:-0.05px;white-space:nowrap;">200</div>
<div style="position:absolute;right:109.0px;top:484.4px;height:12px;line-height:12px;font-size:8.5px;font-weight:700;color:#2a2a36;letter-spacing:-0.05px;white-space:nowrap;">200</div>
<div style="position:absolute;right:30.799999999999955px;top:484.4px;height:12px;line-height:12px;font-size:8.5px;font-weight:700;color:#2a2a36;letter-spacing:-0.05px;white-space:nowrap;">200</div>
<div style="position:absolute;left:191px;top:503.5px;width:67.5px;height:6px;background:#5f5c70;border-radius:3px;"></div>
<div style="position:absolute;left:743px;top:503.3px;width:231px;height:6px;background:#5f5c70;border-radius:3px;"></div>
</body></html>
